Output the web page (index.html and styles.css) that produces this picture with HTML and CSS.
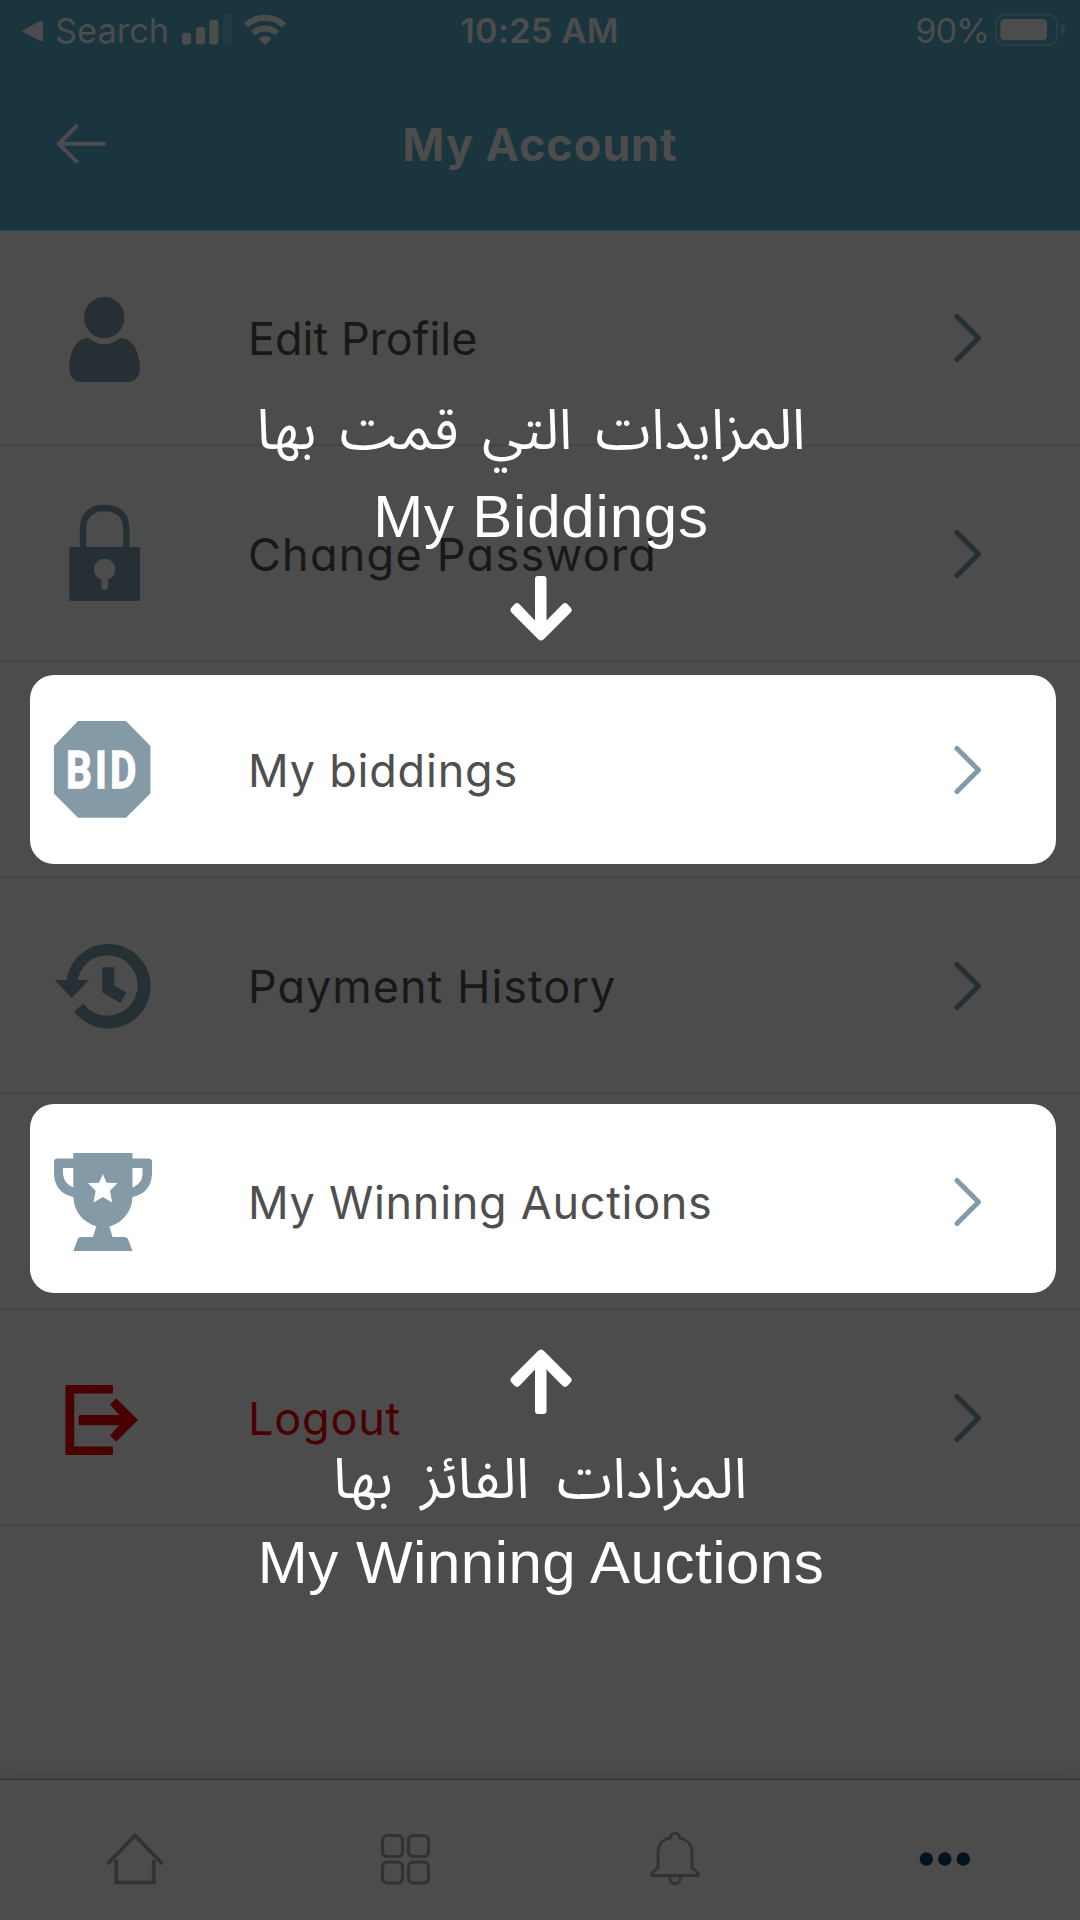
FILE: index.html
```
<!DOCTYPE html>
<html lang="en">
<head>
<meta charset="utf-8">
<title>My Account</title>
<link rel="stylesheet" href="styles.css">
</head>
<body>
<div class="screen">
  <header class="header">
    <div class="status">
      <div class="status-left">
        <svg class="back-app" width="23" height="24" viewBox="0 0 23 24"><path d="M1.5 12 20.5 1.8Q21.5 1.5 21.5 3V21Q21.5 22.5 20.5 22.2Z" fill="currentColor" stroke="currentColor" stroke-linejoin="round"/></svg>
        <span class="status-search">Search</span>
        <svg class="signal" width="50" height="32" viewBox="0 0 50 32"><g fill="currentColor"><rect x="0" y="20" width="9" height="11.5" rx="2.5"/><rect x="14" y="14" width="9" height="17.5" rx="2.5"/><rect x="27.3" y="7" width="9" height="24.5" rx="2.5"/></g><rect x="41" y="1" width="8.5" height="30.5" rx="2.5" fill="#203943"/></svg>
        <svg class="wifi" width="44" height="33" viewBox="243 12 44 33"><g fill="none" stroke="currentColor" stroke-width="6.2"><path d="M246 24.2A28 28 0 0 1 284 24.2" stroke-linecap="butt"/><path d="M253 32.4A17.2 17.2 0 0 1 277 32.4"/></g><path d="M258.6 37.8Q265 32.2 271.4 37.8L265 44.2Z" fill="currentColor"/></svg>
      </div>
      <span class="status-time">10:25 AM</span>
      <div class="status-right">
        <span class="status-pct">90%</span>
        <svg class="battery" width="71" height="34" viewBox="995 12 71 34"><rect x="996" y="13.8" width="61" height="30" rx="8" fill="none" stroke="#2a3d45" stroke-width="2.4"/><rect x="1000.3" y="18" width="46.7" height="21.3" rx="4.5" fill="currentColor"/><path d="M1061 23Q1065 25 1065 29T1061 35Z" fill="#2f4048"/></svg>
      </div>
    </div>
    <div class="titlebar">
      <svg class="back" width="52" height="44" viewBox="55 122 52 44"><path d="M76.5 126 58.8 143.8 76.5 161.3M59 143.8H104" fill="none" stroke="currentColor" stroke-width="4" stroke-linecap="round" stroke-linejoin="round"/></svg>
      <h1 class="title">My Account</h1>
    </div>
  </header>

  <main class="menu">
    <div class="row">
      <svg class="icon" viewBox="48 282 112 112"><ellipse cx="104.2" cy="317.5" rx="20.2" ry="20.7"/><path d="M89 338.5Q104.5 350.5 119.500 338.500C132 336.500 140 352 140 369Q139 382 126 382H83Q70 382 69.200 369C69.200 352 77 336.500 89 338.500Z"/></svg>
      <span class="label edit">Edit Profile</span>
      <svg class="chevron" viewBox="0 0 32 54"><path d="M5 5.500 26.500 27 5 48.500"/></svg>
    </div>
    <div class="row">
      <svg class="icon" viewBox="48 498 112 112"><path d="M83 548V528Q84 508 104.700 508T126.300 528V548" fill="none" stroke="currentColor" stroke-width="6.300"/><path fill-rule="evenodd" d="M71 547H138.200Q140 547 140 549V599Q140 601 138 601H71.200Q69.300 601 69.300 599V549Q69.300 547 71 547ZM101.300 579.500V587A3.400 3.400 0 0 0 108 587V579.500A10.700 10.700 0 1 0 101.300 579.500Z"/></svg>
      <span class="label password">Change Password</span>
      <svg class="chevron" viewBox="0 0 32 54"><path d="M5 5.500 26.500 27 5 48.500"/></svg>
    </div>
    <div class="row spot spot-bids">
      <svg class="icon" viewBox="48 714 112 112"><path d="M78 721H126L150.400 746V793.500L126 817.700H78L53.900 793.500V746Z"/><text class="bid" transform="translate(66 788.200) scale(.78 1)">BID</text></svg>
      <span class="label bids">My biddings</span>
      <svg class="chevron" viewBox="0 0 32 54"><path d="M5 5.500 26.500 27 5 48.500"/></svg>
    </div>
    <div class="row">
      <svg class="icon" viewBox="48 930 112 112"><path d="M54.500 980H66.500A42.300 42.300 0 1 1 74.200 1011.200L83.300 1003.800A30.300 30.300 0 1 0 77.600 980H89L71.800 998Z"/><path d="M102.200 967.300H114.300V985.500L126.400 992.500 120.400 1003 102.200 992.300Z"/></svg>
      <span class="label history">Payment History</span>
      <svg class="chevron" viewBox="0 0 32 54"><path d="M5 5.500 26.500 27 5 48.500"/></svg>
    </div>
    <div class="row spot spot-wins">
      <svg class="icon" viewBox="48 1146 112 112"><path fill-rule="evenodd" d="M73.300 1153H132.500V1158.500H148.500Q152 1158.500 152 1162V1174Q151 1193 132.500 1197C132 1212 122 1223 109.500 1226.500L112.500 1237H124Q127 1237 128 1239L132.500 1251H73.300L77.800 1239Q78.500 1237 81.500 1237H93L96.300 1226.500C83 1222 74 1212 73.300 1197Q55 1193 54 1174V1162Q54 1158.500 57.500 1158.500H73.300ZM63 1168V1174Q64 1184 73.300 1187.500V1168ZM132.500 1168V1187.500Q142 1184 142.500 1174V1168ZM102.900 1174 99 1182.700 88 1183 95.700 1190.800 93.500 1202.500 102.900 1197 112.200 1202.500 110 1190.800 117.500 1183 106.600 1182.700Z"/></svg>
      <span class="label wins">My Winning Auctions</span>
      <svg class="chevron" viewBox="0 0 32 54"><path d="M5 5.500 26.500 27 5 48.500"/></svg>
    </div>
    <div class="row logout-row">
      <svg class="icon" viewBox="48 1362 112 112"><path d="M67 1385H111.500Q113 1385 113 1386.500V1392Q113 1393.600 111.500 1393.600H74.200V1446.600H111.500Q113 1446.600 113 1448V1453.500Q113 1455 111.500 1455H67Q65.400 1455 65.400 1453.500V1386.500Q65.400 1385 67 1385Z"/><path d="M80 1415H119.300L110 1404.500 116.200 1398.300 137.900 1420 116.200 1441.800 110 1435.600 119.300 1425.300H80Q78.600 1425.300 78.600 1424V1416.500Q78.600 1415 80 1415Z"/></svg>
      <span class="label logout">Logout</span>
      <svg class="chevron" viewBox="0 0 32 54"><path d="M5 5.500 26.500 27 5 48.500"/></svg>
    </div>
  </main>

  <nav class="tabs">
    <svg class="tab" viewBox="0 0 64 64"><path d="M5.500 35 32 7.500 58.500 35M13.200 33V54.300H50.800V33" stroke-width="3.700" stroke-linecap="round"/></svg>
    <svg class="tab" viewBox="0 0 64 64"><g stroke-width="3.200"><rect x="9.500" y="7.500" width="20" height="21" rx="5"/><rect x="35.500" y="7.500" width="20" height="21" rx="5"/><rect x="9.500" y="34" width="20" height="21" rx="5"/><rect x="35.500" y="34" width="20" height="21" rx="5"/></g></svg>
    <svg class="tab" viewBox="0 0 64 64"><path d="M9 47.500V45L15 39.500V25C15 16 20 11.500 27.500 10 27.500 3.500 36.500 3.500 36.500 10 44 11.500 49 17 49 25V39.500L55 45V47.500ZM26.500 49C26.500 58 37.500 58 37.500 49" stroke-width="2.800"/></svg>
    <svg class="tab tab-on" viewBox="0 0 64 64"><ellipse cx="13.300" cy="31" rx="6.700" ry="6.800"/><ellipse cx="31.800" cy="31" rx="6.700" ry="6.800"/><ellipse cx="50.300" cy="31" rx="6.700" ry="6.800"/></svg>
  </nav>

  <section class="callout callout-bids">
    <p class="ar ar-bids" lang="ar" dir="rtl">المزايدات التي قمت بها</p>
    <p class="en en-bids">My Biddings</p>
    <svg class="arrow" viewBox="0 0 64 66"><path d="M26 4Q26 1 29 1H34.500Q37.500 1 37.500 4V45.500L53.500 29.200Q56 27 58.500 29.200L61.500 32.500Q64 35 61.500 37.500L35 64Q32 67 29 64L2.500 37.500Q.2 35 2.500 32.500L5.500 29.200Q8 27 10.500 29.200L26 45.500Z"/></svg>
  </section>
  <section class="callout callout-wins">
    <svg class="arrow arrow-up" viewBox="0 0 64 66"><path d="M26 4Q26 1 29 1H34.500Q37.500 1 37.500 4V45.500L53.500 29.200Q56 27 58.500 29.200L61.500 32.500Q64 35 61.500 37.500L35 64Q32 67 29 64L2.500 37.500Q.2 35 2.500 32.500L5.500 29.200Q8 27 10.500 29.200L26 45.500Z"/></svg>
    <p class="ar ar-wins" lang="ar" dir="rtl">المزادات الفائز بها</p>
    <p class="en en-wins">My Winning Auctions</p>
  </section>
</div>
</body>
</html>
```
FILE: styles.css
```
* { box-sizing: border-box; }
body { margin: 0; background: #4c4c4c; font-family: Inter, "Liberation Sans", sans-serif; }
svg { display: block; flex: none; }

.screen { position: relative; width: 1080px; height: 1920px; display: flex; flex-direction: column; overflow: hidden; }

.header { height: 230px; flex: none; background: #1a353e; color: #4c4c4c; box-shadow: 0 1px #34444b; }
.status { height: 60px; padding: 0 14px 0 21px; display: grid; grid-template-columns: 1fr auto 1fr; align-items: center; font-size: 34.4px; line-height: 61px; }
.status-left { display: flex; align-items: center; }
.status-search { margin-left: 11px; width: 127px; }
.signal { margin-top: -3px; }
.wifi { margin: -3px 0 0 11px; }
.status-time { font-weight: 600; letter-spacing: .2px; margin-left: -8px; }
.status-right { display: flex; align-items: center; justify-content: flex-end; }
.status-pct { letter-spacing: -1px; margin-right: 6px; }
.battery { margin-top: -2px; }
.titlebar { height: 168px; display: grid; grid-template-columns: 55px 1fr 107px; align-items: center; }
.back { grid-column: 2; grid-row: 1; }
.title { grid-column: 1 / -1; grid-row: 1; margin: 0; text-align: center; font-size: 45px; font-weight: 700; letter-spacing: .9px; }

.menu { height: 1549px; flex: none; }
.row { position: relative; height: 216px; display: flex; align-items: center; padding: 0 92px 0 48px; box-shadow: inset 0 -2px #464646; color: #262f33; }
.icon { position: relative; width: 112px; height: 112px; margin-right: 88px; fill: currentColor; }
.label { position: relative; flex: 1; color: #181818; font-size: 45px; white-space: nowrap; font-feature-settings: "cv11"; }
.chevron { position: relative; width: 32px; height: 54px; margin-right: 4px; fill: none; stroke: currentColor; stroke-width: 5px; stroke-linecap: round; stroke-linejoin: round; }
.edit { letter-spacing: 0; }
.password { letter-spacing: 1.25px; }
.bids, .logout { letter-spacing: .8px; }
.history { letter-spacing: 1px; }
.wins { letter-spacing: .7px; }

.spot { color: #849ba7; }
.spot .label { color: #4f4f4f; }
.spot::before { content: ""; position: absolute; left: 30px; right: 24px; height: 189px; border-radius: 24px; background: #fff; }
.spot-bids::before { top: 13px; }
.spot-wins::before { top: 10px; }
.bid { font: 700 52px Roboto, sans-serif; fill: #fff; stroke: #fff; stroke-width: 1.3px; letter-spacing: 4px; }
.logout-row .icon, .logout-row .logout { color: #480000; }

.tabs { height: 141px; flex: none; display: grid; grid-template-columns: repeat(4, 1fr); justify-items: center; padding-top: 48px; border-top: 1px solid #323232; background: #4c4c4c; box-shadow: 0 -2px 14px rgba(0, 0, 0, .16); }
.tab { width: 64px; height: 64px; fill: none; stroke: #323232; }
.tab-on { fill: #00131f; stroke: none; }

.callout { position: absolute; left: 0; width: 1080px; display: flex; flex-direction: column; align-items: center; color: #fff; }
.callout p { margin: 0; white-space: nowrap; }
.callout-bids { top: 384px; }
.callout-wins { top: 1349px; }
.callout .ar { height: 86px; font: 400 56px/86px "Noto Sans", "Noto Sans Arabic", sans-serif; }
.callout .ar-bids { margin-right: 18px; word-spacing: 9px; }
.callout .ar-wins { margin-top: 18px; word-spacing: 13px; }
.callout .en { height: 86px; margin-left: 2px; font: 400 60px/86px "Liberation Sans", sans-serif; }
.callout .en-bids { letter-spacing: .8px; margin-top: 4px; }
.callout .en-wins { letter-spacing: .5px; margin-top: 1px; }
.arrow { width: 64px; height: 66px; fill: #fff; margin-left: 2px; }
.arrow-up { transform: scaleY(-1); }
.callout-bids .arrow { margin-top: 15px; }
```
